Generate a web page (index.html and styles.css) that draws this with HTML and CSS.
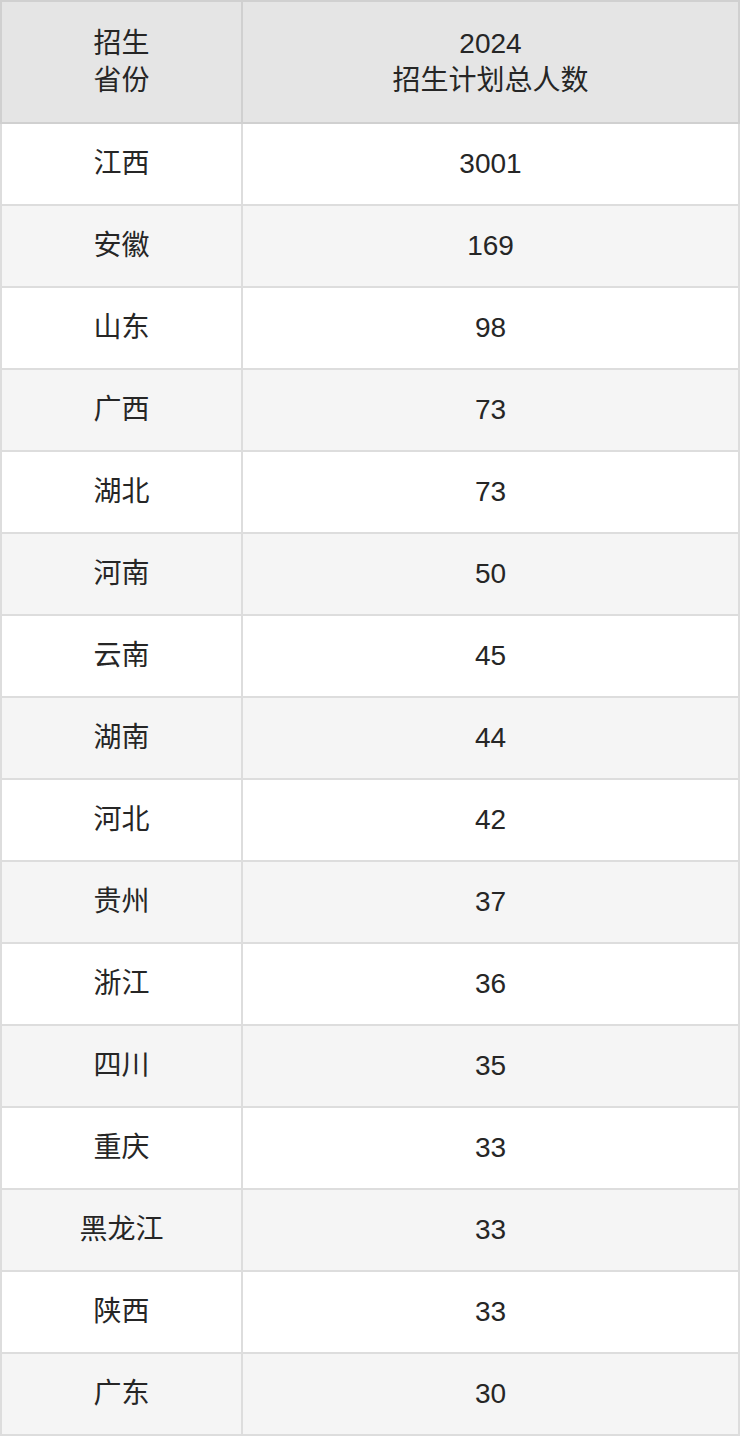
FILE: index.html
```html
<!DOCTYPE html>
<html lang="zh-CN">
<head>
<meta charset="utf-8">
<title>招生计划</title>
<link rel="stylesheet" href="styles.css">
</head>
<body>
<table class="plan">
  <thead>
    <tr><th class="c1">招生<br>省份</th><th class="c2">2024<br>招生计划总人数</th></tr>
  </thead>
  <tbody>
    <tr><td>江西</td><td>3001</td></tr>
    <tr><td>安徽</td><td>169</td></tr>
    <tr><td>山东</td><td>98</td></tr>
    <tr><td>广西</td><td>73</td></tr>
    <tr><td>湖北</td><td>73</td></tr>
    <tr><td>河南</td><td>50</td></tr>
    <tr><td>云南</td><td>45</td></tr>
    <tr><td>湖南</td><td>44</td></tr>
    <tr><td>河北</td><td>42</td></tr>
    <tr><td>贵州</td><td>37</td></tr>
    <tr><td>浙江</td><td>36</td></tr>
    <tr><td>四川</td><td>35</td></tr>
    <tr><td>重庆</td><td>33</td></tr>
    <tr><td>黑龙江</td><td>33</td></tr>
    <tr><td>陕西</td><td>33</td></tr>
    <tr><td>广东</td><td>30</td></tr>
  </tbody>
</table>
</body>
</html>
```
FILE: styles.css
```css
html, body {
  margin: 0;
  padding: 0;
  background: #ffffff;
}
body {
  font-family: "Liberation Sans", "Noto Sans CJK SC", sans-serif;
  color: #262626;
  font-size: 28px;
}
.plan {
  width: 740px;
  border-collapse: collapse;
  table-layout: fixed;
}
.plan th, .plan td {
  text-align: center;
  vertical-align: middle;
  padding: 0;
  font-weight: normal;
}
.plan th {
  background: #e5e5e5;
  border: 2px solid #d0d0d0;
  height: 120px;
  line-height: 37px;
}
.plan .c1 { width: 239px; }
.plan td {
  border: 2px solid #dddddd;
  height: 80px;
  line-height: 32px;
}
.plan tbody tr:nth-child(even) td {
  background: #f5f5f5;
}
```
